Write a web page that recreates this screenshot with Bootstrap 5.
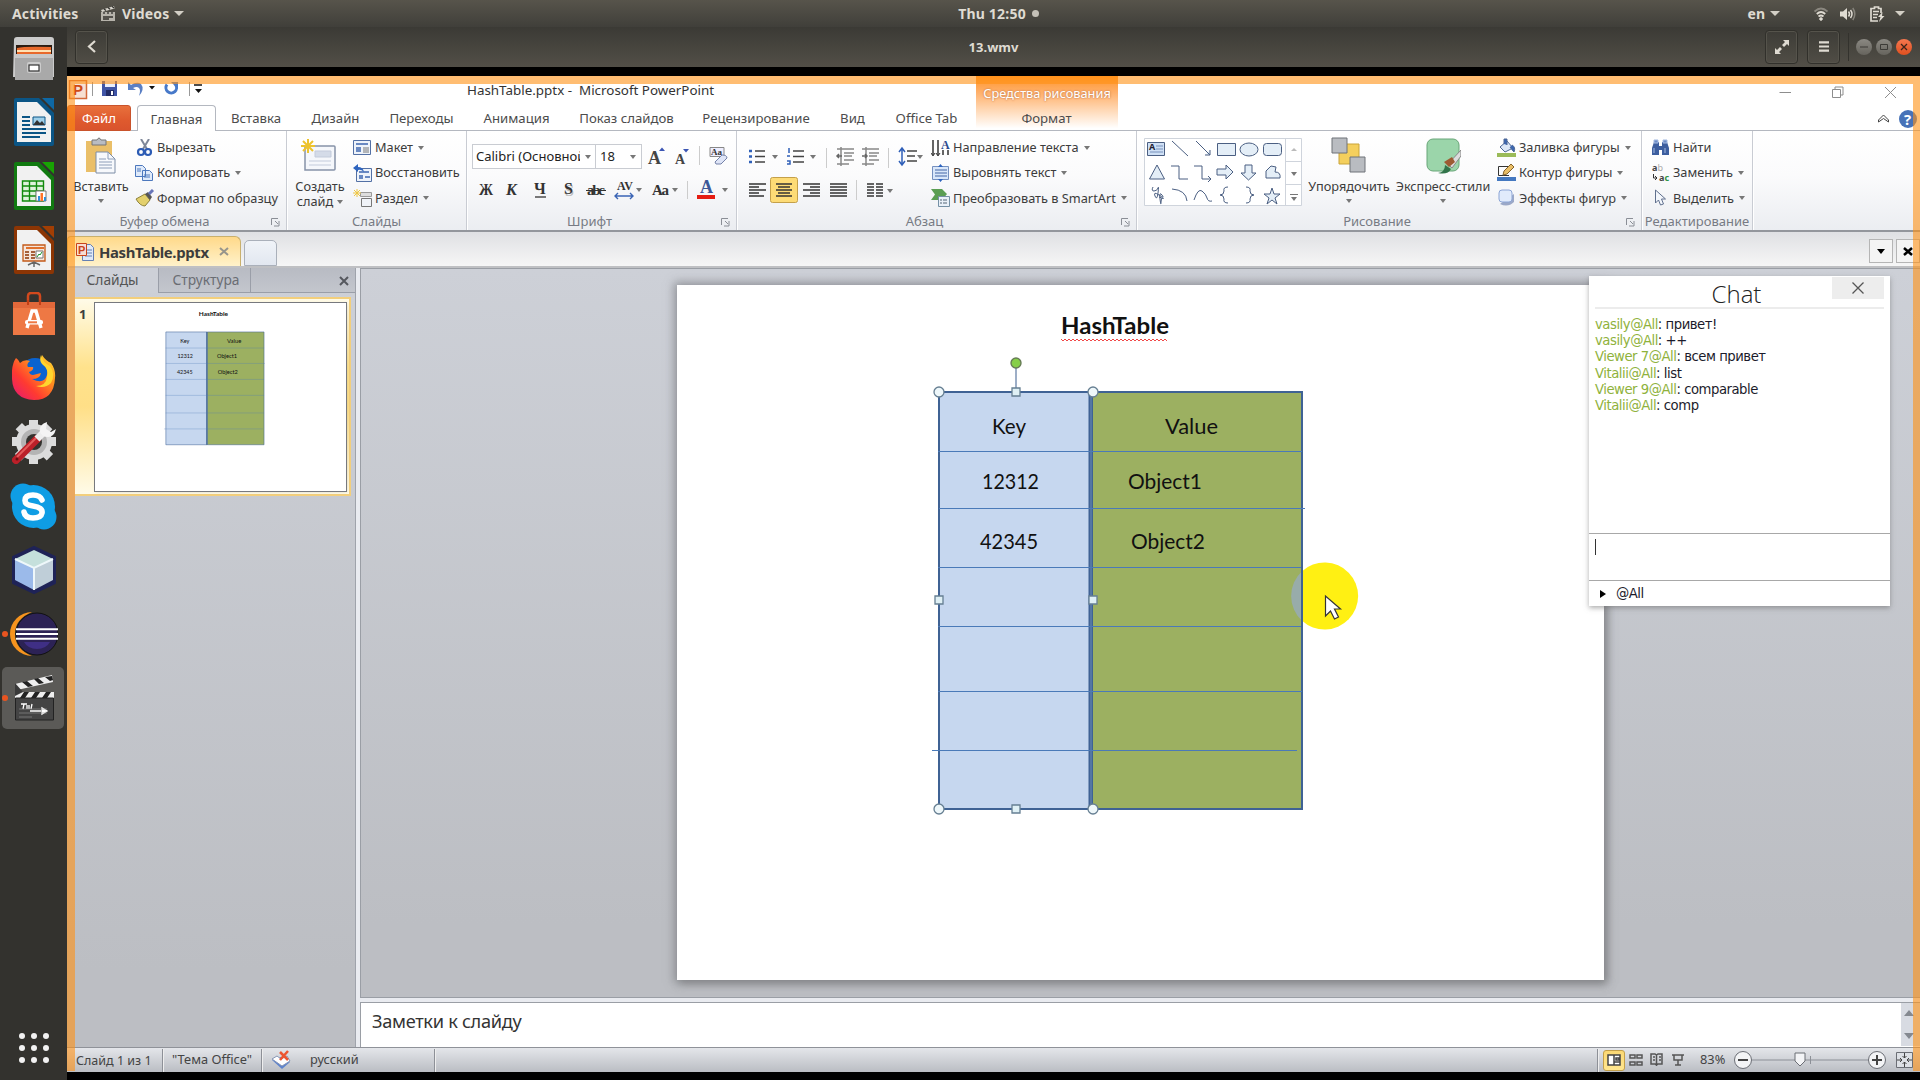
<!DOCTYPE html>
<html lang="ru">
<head>
<meta charset="utf-8">
<title>13.wmv</title>
<link href="https://cdn.jsdelivr.net/npm/bootstrap@5.3.0/dist/css/bootstrap.min.css" rel="stylesheet">
<script src="https://cdn.jsdelivr.net/npm/bootstrap@5.3.0/dist/js/bootstrap.bundle.min.js" defer></script>
<style>
html,body{height:100%}
body{width:1920px;height:1080px;overflow:hidden;background:#000;font-family:"Noto Sans","Open Sans",sans-serif;color:#3c3c3c;font-size:13px;line-height:1.2}
svg{display:block;flex:none}
.nw{white-space:nowrap}
/* desktop */
.topbar{height:27px;background:linear-gradient(#57544b,#403f3a);color:#dfdbd2;font:bold 14px "Noto Sans",sans-serif}
.tri{width:0;height:0;border:5px solid transparent;border-top-color:#d3cfc6;border-bottom:0;flex:none}
.dock{width:67px;background:#33322e;flex:none}
.dock-item{width:67px;height:64px;display:flex;align-items:center;justify-content:center;flex:none;position:relative}
.dock-item:first-child{margin-top:-1px}
.dock-item.active-app::before{content:"";position:absolute;left:2px;top:1px;width:62px;height:62px;border-radius:5px;background:#5b5a57}
.dock-item.running::after{content:"";position:absolute;left:2px;top:29px;width:6px;height:6px;border-radius:50%;background:#e95420}
.dock-item svg{position:relative}
.headbar{height:40px;background:linear-gradient(#3b3a35,#524f47);color:#dfdbd2;font:bold 13px "Noto Sans",sans-serif;padding:0 8px 1px 8px}
.hbtn{width:33px;height:34px;border:1px solid #31302b;box-shadow:0 0 0 1px #55534b inset;border-radius:4px;display:flex;align-items:center;justify-content:center}
.wbtn{width:16px;height:16px;border-radius:50%;background:linear-gradient(#8b8983,#66645d);display:flex;align-items:center;justify-content:center}
.wbtn.quit{background:linear-gradient(#f5774f,#e0501f)}
/* video */
.video{height:995px;background:#fff;position:relative}
.frame{position:absolute;inset:0;border:solid rgba(255,145,20,.6);border-width:8px 7px 0 8px;pointer-events:none;z-index:9}
.titlerow{height:29px;padding-top:4px}
.apptitle{font-size:13.4px;color:#333;width:246px;padding-top:2px}
.tabrow{height:26px;color:#4c4c4c}
.rtab{display:flex;align-items:center;justify-content:center;border-bottom:1px solid #b4b8c0;height:26px;padding-top:3px;font-size:13.2px;white-space:nowrap;flex:none}
.rtab.file{width:64px;background:linear-gradient(#e8703c,#df5a2e 60%,#d9532d);color:#fff;border-radius:3px 3px 0 0;border:1px solid #c9532c;padding-top:2px}
.rtab.cur{width:79px;border:1px solid #b4b8c0;border-bottom:0;border-radius:4px 4px 0 0;background:#fff;padding-top:2px}
.ctx{position:absolute;left:909px;top:0;width:142px;height:54px;background:linear-gradient(#ff9327,#ffb06a 30%,#ffd7b3 62%,rgba(255,255,255,0) 97%);color:#fff;font-size:12.800px;text-align:center;padding-top:10px;text-shadow:0 0 2px #c87b48,0 0 2px #d69060}
.ribbon{height:101px;background:linear-gradient(#fff,#fbfbfc 45%,#ebedf1);border-bottom:2px solid #93969c}
.grp{border-right:1px solid #c9ccd3;box-shadow:1px 0 0 #fff;display:flex;flex-direction:column;flex:none;height:99px;padding-top:4px}
.gbody{height:77px;display:flex}
.glabel{height:18px;color:#777b84;font-size:13px;display:flex;align-items:center;text-align:center;padding-top:1px}
.glabel span{flex:1}
.rrow{height:25.4px;display:flex;align-items:center;white-space:nowrap;font-size:12.75px}
.rrow svg{width:20px;margin-right:2px}
.dd{width:0;height:0;border:3.5px solid transparent;border-top:4px solid #777;border-bottom:0;flex:none;display:inline-block;margin-left:5px}
.big{display:flex;flex-direction:column;align-items:center;text-align:center;padding-top:2px;white-space:nowrap;font-size:12.75px;flex:none}
.big svg{height:38px;margin-bottom:4px}
.big .dd{margin:5px 0 0}
.doctabs{height:36px;background:linear-gradient(#dfe0e3,#f6f6f6);border-bottom:2px solid #bfc0c3}
.doc{width:174px;height:30px;border:1px solid #c9b06d;border-bottom:0;border-radius:4px 6px 0 0;background:linear-gradient(#ffd98a,#fff2ca);font:bold 14.9px "Noto Sans";letter-spacing:-.35px;color:#3c3c3c;padding-left:8px}
.ghost{width:33px;height:26px;border:1px solid #aab0ba;border-radius:5px 5px 0 0;background:linear-gradient(#f0f3f8,#e2e7f0)}
.sqbtn{width:24px;height:24px;border:1px solid #b5b5b5;background:#f4f4f4}
.workarea{height:779px;background:#e9ebf0}
.side{width:289px;background:linear-gradient(#cdd0d7,#bcbec3 90%);border-right:1px solid #9fa3ab;flex:none}
.stabs{height:25px;border-bottom:1px solid #9a9ea8;background:linear-gradient(#b8bbc3,#c3c6cd);font-size:13.8px;color:#555}
.thumb{margin:4px 4px 0 8px;height:199px;border:2px solid #f3cf7c;border-left:0;background:linear-gradient(#fffbe8,#ffe28c 35%,#ffdf87 55%,#fffbe8);padding:4px 3px 3px 0}
.thumb svg{background:#fff;outline:1px solid #77797e;box-shadow:1px 1px 3px #7774}
.main{flex:1;margin-left:4px;display:flex;flex-direction:column}
.stage{height:730px;background:linear-gradient(#cdd0d7,#bcbec3 90%);border:1px solid #9a9ea5;border-width:1px 0 1px 1px;padding:16px 0 0 316px}
.slide{width:927px;height:695px;background:#fff;box-shadow:0 0 9px 3px #74767b99,3px 4px 8px #7778}
.notes{margin-top:4px;height:45px;border:1px solid #9a9ea5;border-width:1px 0 0 1px;background:#fff;font:18.2px/24px "Noto Sans";letter-spacing:-.3px;color:#333;padding:6px 0 0 11px;display:flex;justify-content:space-between}
.status{height:25px;background:linear-gradient(#e4e6ea,#babdc3);border-top:1px solid #8f9299;font-size:12.8px;color:#444}
.vsep{width:1px;height:23px;background:#8d9097;box-shadow:1px 0 #eee;flex:none}
.chat{position:absolute;left:1522px;top:200px;width:301px;height:330px;background:#fff;box-shadow:0 2px 5px #6668;z-index:5;color:#1b1b2b}
.chat-top{height:33px;margin:0 6px;border-bottom:2px solid #ececec;font:300 24px "Open Sans";color:#222;position:relative;text-align:center;padding:1px 6px 0 0}
.chat-x{position:absolute;right:0;top:1px;width:52px;height:22px;background:#ededed}
.msgs{height:224px;padding:7px 6px;font:14.7px/16.2px "DejaVu Sans Condensed","Noto Sans";letter-spacing:-.47px}
.msgs b{font-weight:400;color:#8fb23c}
.hl{background:linear-gradient(#fbd873,#ffe68f);border:1px solid #c4a04a;border-radius:3px}
</style>
</head>
<body class="d-flex flex-column">
<header class="topbar d-flex align-items-center position-relative flex-shrink-0">
  <span class="nw" style="margin-left:12px;width:89px;letter-spacing:.15px">Activities</span>
  <svg width="15" height="15" viewBox="0 0 15 15"><path d="M0 6h14v9H0z" fill="#b6b3ab"/><path d="M0 4 13 0l.6 2.6L1 6z" fill="#d8d5cd"/><path d="m3 3 2 1.6m2-3 2 1.7m2-3 2 1.6M3 6v2m4-2v2m4-2v2M2 11h10M2 13h6" stroke="#33322e" stroke-width="1.3"/></svg>
  <span class="nw" style="margin:0 5px 0 6px;letter-spacing:.2px">Videos</span><i class="tri"></i>
  <span class="position-absolute start-0 end-0 text-center" style="padding-left:77px"><span class="d-inline-flex align-items-center" style="gap:6px"><span style="letter-spacing:.2px">Thu 12:50</span><svg width="7" height="7"><circle cx="3.5" cy="3.5" r="3.5" fill="#c4c0b7"/></svg></span></span>
  <div class="ms-auto d-flex align-items-center" style="margin-right:15px">
    <span style="margin-right:5px">en</span><i class="tri"></i>
    <svg style="margin-left:34px" width="14" height="14" viewBox="0 0 14 14" fill="none" stroke="#dfdbd2" stroke-width="1.8"><path d="M.5 4.5Q7-1.5 13.500 4.500" stroke="#8a877f"/><path d="M2.800 7Q7 3 11.200 7M4.500 9.500Q7 7.500 9.500 9.500"/><circle cx="7" cy="12" r="1.300" fill="#dfdbd2" stroke-width="1"/></svg>
    <svg style="margin-left:12px" width="16" height="14" viewBox="0 0 16 14"><path d="M0 4.500h3L7 1v12L3 9.500H0z" fill="#dfdbd2"/><path d="M8.500 4.500q2 2.500 0 5M10.500 3q3 4 0 8" fill="none" stroke="#dfdbd2" stroke-width="1.500"/><path d="M12.800 1q4 6 0 12" fill="none" stroke="#86837b" stroke-width="1.500"/></svg>
    <svg style="margin:0 10px 0 14px" width="15" height="16" viewBox="0 0 15 16" fill="none" stroke="#dfdbd2" stroke-width="1.700"><path d="M11 7V2.500H8.500V1H4.500v1.500H1V15h7M3 5.500h6M3 8.500h5M3 11.500h4"/><path d="M12.500 6 8 11h2.500L9 16l5.500-6H12z" fill="#dfdbd2" stroke="none"/></svg>
    <i class="tri"></i>
  </div>
</header>
<div class="d-flex flex-grow-1">
<nav class="dock d-flex flex-column">
  <div class="dock-item"><svg width="42" height="44" viewBox="0 0 42 44"><path d="M1 4q0-3 3-3h34q3 0 3 3v37H0z" fill="#cbcbcb"/><path d="M3 9h36v12H3z" fill="#2b1c12"/><path d="M4 12q8-2 34-1v9H4z" fill="#e8692b"/><path d="M4 14h34v2H4z" fill="#ffe1b3"/><path d="M2 18h38v26H2z" fill="#a9a9a9"/><path d="M2 18h38v4H2z" fill="#c8c8c8"/><rect x="14" y="26" width="14" height="11" rx="2" fill="#ccc"/><rect x="16" y="29" width="10" height="6" fill="#fff" stroke="#333" stroke-width="1.200"/></svg></div>
  <div class="dock-item"><svg width="40" height="48" viewBox="0 0 40 48"><path d="M2 0h24l14 14v32q0 2-2 2H2q-2 0-2-2V2q0-2 2-2z" fill="#0b5585"/><path d="M3 4h20l14 14v26H3z" fill="#f1f1f1"/><path d="m25 0 15 15V0z" fill="#33322e"/><path d="M28 0h12v12z" fill="#0e68a5"/><path d="M8 19h8M8 23h8M8 27h8M8 31h24M8 35h24M8 39h18" stroke="#0b5585" stroke-width="2"/><path d="M19 19h12v8H19z" fill="#9fd0ea" stroke="#0b5585"/><path d="m19 27 4-5 3 3 2-2 3 4z" fill="#333"/></svg></div>
  <div class="dock-item"><svg width="40" height="48" viewBox="0 0 40 48"><path d="M2 0h24l14 14v32q0 2-2 2H2q-2 0-2-2V2q0-2 2-2z" fill="#117a10"/><path d="M3 4h20l14 14v26H3z" fill="#f1f1f1"/><path d="m25 0 15 15V0z" fill="#33322e"/><path d="M28 0h12v12z" fill="#18a303"/><path d="M8.500 19h21v20h-21zM8 24h21M8 29h21M8 34h21M15.500 19v20M22.500 19v20" stroke="#118a0c" stroke-width="1.400" fill="#dff3dc"/><path d="M22 29h10v10H22z" fill="#fff" stroke="#777"/><path d="M24 39v-5h2v5zM30 39v-4h2v4z" fill="#2c8fd8"/><path d="M26.500 39v-8h2.500v8z" fill="#ff7429"/></svg></div>
  <div class="dock-item"><svg width="40" height="48" viewBox="0 0 40 48"><path d="M2 0h24l14 14v32q0 2-2 2H2q-2 0-2-2V2q0-2 2-2z" fill="#8c3504"/><path d="M3 4h20l14 14v26H3z" fill="#f1f1f1"/><path d="m25 0 15 15V0z" fill="#33322e"/><path d="M28 0h12v12z" fill="#a33e03"/><path d="M9 19h22v16H9z" fill="#f4e5dc" stroke="#c35a18" stroke-width="1.300"/><path d="M12 22h18" stroke="#e0712d" stroke-width="2"/><path d="M11 26h4M11 29h4M11 32h4M17 26h4M17 29h4M17 32h4" stroke="#8c3504" stroke-width="1.500"/><path d="M22 25h7v7h-7z" fill="#fff" stroke="#777"/><path d="m23 31 2-3 1 1 2-3" fill="none" stroke="#17962b"/><path d="m14 39 6-3 6 3M20 36v5" stroke="#666" stroke-width="1.500" fill="none"/></svg></div>
  <div class="dock-item"><svg width="42" height="44" viewBox="0 0 42 44"><path d="M15 13V4q0-3 3-3h6q3 0 3 3v9" fill="none" stroke="#d2491d" stroke-width="2.500"/><path d="M0 10h42v33H0z" fill="#ee7844"/><path d="M0 10h42v6H0z" fill="#e2683a"/><path d="M15 13V8M27 13V8" stroke="#c33f15" stroke-width="2"/><path d="m14 36 5-17h4l5 17" fill="none" stroke="#fff" stroke-width="3.400"/><rect x="12" y="28" width="18" height="4.500" rx="2" fill="#fff"/><path d="M15 30.300h9" stroke="#ee7844" stroke-width="2"/></svg></div>
  <div class="dock-item"><svg width="44" height="46" viewBox="0 0 44 46"><defs><linearGradient id="ff" x1="0" y1="1" x2="1" y2="0"><stop stop-color="#e3157a"/><stop offset=".35" stop-color="#ff3b30"/><stop offset=".7" stop-color="#ff9a1c"/><stop offset="1" stop-color="#ffe83d"/></linearGradient></defs><circle cx="23" cy="19" r="16" fill="#0a63d0"/><path d="M4 3q3 2 4 5 4-4 10-2-4 3-2 6h5q1 3-4 5 1 3 4 3l8-2q-1 6-9 6 12 6 15-4 2-8-4-12-2-3-1-8 4 6 9 8 5 7 4 15Q42 45 22 45 1 44 0 24-1 10 4 3z" fill="url(#ff)"/><path d="M29 0q-2 6 1 9 7 5 5 13-1 9-11 9 9 3 15-3 5-9-1-17-7-3-9-11z" fill="#ffd52e"/></svg></div>
  <div class="dock-item"><svg width="44" height="44" viewBox="0 0 44 44"><g fill="#dcdcdc"><circle cx="22" cy="22" r="18"/><path d="M17 0h9v44h-9zM0 17h44v9H0z"/><path d="M17 0h9v44h-9zM0 17h44v9H0z" transform="rotate(45 22 22)"/></g><circle cx="22" cy="22" r="13" fill="#b4b4b4"/><circle cx="22" cy="22" r="8" fill="#33322e"/><path d="M4 40 25 19" stroke="#bb2029" stroke-width="8" stroke-linecap="round"/><path d="m5 37 19-19" stroke="#e35b5b" stroke-width="2"/><path d="m25 19 6-6" stroke="#eee" stroke-width="7"/><path d="M28 12q-1-8 7-10l-1 7 5 3 5-3q-2 8-8 8-6 0-8-5z" fill="#f4f4f4"/><circle cx="5" cy="39" r="1.500" fill="#611"/></svg></div>
  <div class="dock-item"><svg width="47" height="47" viewBox="0 0 47 47"><g fill="#0f9de4"><circle cx="13" cy="13" r="12.500"/><circle cx="34" cy="34" r="12.500"/><circle cx="23.500" cy="23.500" r="21.500"/></g><path d="M32 17q-2-5-9-5-8 0-8 5.500 0 4.500 8 5.500 10 1.500 9 7-1 5-9 5-8 0-9-6" fill="none" stroke="#fff" stroke-width="5.600" stroke-linecap="round"/></svg></div>
  <div class="dock-item"><svg width="46" height="48" viewBox="0 0 46 48"><path d="m23 1 21 10v26L23 47 2 37V11z" fill="#1f2357" stroke="#1f2357" stroke-width="2" stroke-linejoin="round"/><path d="m23 4 19 9-19 9-19-9z" fill="#c5e0dc"/><path d="m4 13 19 9v22L4 34z" fill="#9bbaea"/><path d="m42 13-19 9v22l19-10z" fill="#bfced8"/><path d="M23 22v22M4 13l19 9 19-9" stroke="#eef7fa" stroke-width="2" fill="none"/></svg></div>
  <div class="dock-item running"><svg width="48" height="44" viewBox="0 0 48 44"><path d="M22 0a22 22 0 1 0 0 44Q5 37 5 22T22 0z" fill="#f7941e"/><circle cx="27" cy="22" r="21" fill="#2c2255" stroke="#111"/><path d="M14 30h26q-4 7-13 7t-13-7z" fill="#3f2f85"/><path d="M6 17.200h42M6 22h42M6 26.800h42" stroke="#fff" stroke-width="1.900"/></svg></div>
  <div class="dock-item running active-app"><svg width="40" height="46" viewBox="0 0 40 46"><path d="M1 9 38 0l1 7L3 15z" fill="#eee"/><path d="m8 7 6 5 5-1-6-5zm12-3 5 5 5-1-6-5zM31 2l5 4 3-1-1-4z" fill="#222"/><path d="M1 17h39v6H1z" fill="#eee"/><path d="m10 17-4 6h5l4-6zm11 0-4 6h5l4-6zm11 0-4 6h5l4-6z" fill="#222"/><path d="M1 8v13l8-4z" fill="#3a3a3a"/><path d="M1.500 23h38v22h-38z" fill="#444" stroke="#222"/><path d="M7 29h6m-3 0-1 5m4-4v4m2-4v4m3-5-1 5M16 36h11M28 33v6l5-3z" stroke="#fff" stroke-width="1.300" fill="#fff"/><path d="M5 34h28M5 38h28M5 42h13" stroke="#999" stroke-width=".600"/></svg></div>
  <div class="dock-item mt-auto"><svg width="30" height="30" viewBox="0 0 30 30" fill="#f2f2f2"><circle cx="3" cy="3" r="3"/><circle cx="15" cy="3" r="3"/><circle cx="27" cy="3" r="3"/><circle cx="3" cy="15" r="3"/><circle cx="15" cy="15" r="3"/><circle cx="27" cy="15" r="3"/><circle cx="3" cy="27" r="3"/><circle cx="15" cy="27" r="3"/><circle cx="27" cy="27" r="3"/></svg></div>
</nav>
<main class="flex-grow-1 d-flex flex-column">
  <div class="headbar d-flex align-items-center position-relative">
    <span class="hbtn"><svg width="10" height="13" viewBox="0 0 10 13"><path d="M8 1 2 6.500 8 12" fill="none" stroke="#dfdbd2" stroke-width="2.200"/></svg></span>
    <span class="position-absolute start-0 end-0 text-center">13.wmv</span>
    <div class="ms-auto d-flex align-items-center">
      <span class="hbtn" style="margin-right:9px"><svg width="14" height="14" viewBox="0 0 14 14" fill="#dfdbd2"><path d="M8 0h6v6l-2-2-3 3-2-2 3-3zM0 8l2 2 3-3 2 2-3 3 2 2H0z"/></svg></span>
      <span class="hbtn" style="margin-right:8px"><svg width="10" height="11"><path d="M0 1.300h10M0 5.500h10M0 9.700h10" stroke="#dfdbd2" stroke-width="2.200"/></svg></span>
      <span style="width:1px;height:28px;background:#33322d;margin-right:7px"></span>
      <span class="wbtn" style="margin-right:4px"><svg width="8" height="8"><path d="M0 4h8" stroke="#3c3b37"/></svg></span>
      <span class="wbtn" style="margin-right:4px"><svg width="8" height="8"><path d="M.500 1.500h7v5h-7z" stroke="#3c3b37" fill="none"/></svg></span>
      <span class="wbtn quit"><svg width="8" height="8"><path d="m1 1 6 6m0-6L1 7" stroke="#3c241b" stroke-width="1.300"/></svg></span>
    </div>
  </div>
  <div style="height:9px"></div>
  <section class="video">
    <div class="frame"></div>
    <div class="titlerow d-flex align-items-start">
      <div style="width:400px;padding-left:1px" class="d-flex"><svg width="150" height="20" viewBox="0 0 150 20"><path d="M1.500.500h17v18h-17z" fill="#f7e0d2" stroke="#d46a3b" stroke-width="1.500"/><text x="5" y="15" font-family="Liberation Sans" font-weight="bold" font-size="15" fill="#cf4a17">P</text><path d="M24.500 2v14M121.500 2v14" stroke="#999"/><path d="M34 1h15v15H34z" fill="#4055a6"/><path d="M37 1h10v6H37z" fill="#e9eefb"/><path d="M38 10h8v6h-8z" fill="#222c66"/><path d="M43 11h2v4h-2z" fill="#fff"/><path d="M60 2v8h8l-3-2q4-2 6 0t0 8q6-7 2-12-4-3-10 1z" fill="#5a7fc4"/><path d="M81 6h6l-3 3.500z" fill="#111"/><path d="M99 4.500a5.300 5.300 0 1 0 8.500 0" fill="none" stroke="#4779c9" stroke-width="3"/><path d="M103 2h7v7z" fill="#4779c9"/><path d="M126 5h8" stroke="#111" stroke-width="1.500"/><path d="M127 9h7l-3.500 4z" fill="#111"/></svg></div>
      <span class="apptitle nw" style="white-space:pre">HashTable.pptx -  Microsoft PowerPoint</span>
      <svg class="ms-auto" style="margin-right:22px;margin-top:6px" width="120" height="14" viewBox="0 0 120 14" fill="none" stroke="#8d8d8d"><path d="M1.500 6.500h11.500M54.500 3.500h8v8h-8zM57 3V1h8v8h-2M107 1l11 11M118 1l-11 11"/></svg>
    </div>
    <div class="ctx">Средства рисования</div>
    <div class="tabrow d-flex position-relative">
      <div class="rtab file">Файл</div><div class="rtab" style="width:6px"></div><div class="rtab cur">Главная</div>
      <div class="rtab" style="width:80px">Вставка</div><div class="rtab" style="width:79px">Дизайн</div><div class="rtab" style="width:93px">Переходы</div><div class="rtab" style="width:97px">Анимация</div><div class="rtab" style="width:123px">Показ слайдов</div><div class="rtab" style="width:136px">Рецензирование</div><div class="rtab" style="width:57px">Вид</div><div class="rtab" style="width:91px">Office Tab</div><div class="rtab" style="width:149px">Формат</div>
      <div class="rtab flex-grow-1 justify-content-end" style="padding-right:3px"><svg width="40" height="20" viewBox="0 0 40 20"><path d="m1.500 11 5-5 5 5v2l-5-3.500-5 3.500z" fill="none" stroke="#444"/><circle cx="31" cy="10" r="9" fill="#4672b8"/><text x="27" y="15.500" font-size="15" font-weight="bold" fill="#fff" font-family="Open Sans">?</text></svg></div>
    </div>
    <div class="ribbon d-flex">
      <div class="grp" style="width:220px"><div class="gbody">
        <div class="big" style="width:54px;margin:0 7px 0 7px"><svg width="34" height="38" viewBox="0 0 34 38"><path d="M2 4h26v31H2z" fill="#eabf68"/><path d="M8 3h5q2-4 4 0h5v5H8z" fill="#b9bcc2" stroke="#777"/><path d="M12 15h12l7 7v14H12z" fill="#f7f9fc" stroke="#7d8da6"/><path d="M24 15v7h7M15 22h7M15 25h13M15 28h13M15 31h13" fill="none" stroke="#8c9db8"/></svg>Вставить<i class="dd"></i></div>
        <div><div class="rrow"><svg height="18" viewBox="0 0 20 18"><path d="m6 0 6 10M14 0 8 10" stroke="#7e8798" stroke-width="2"/><circle cx="6" cy="13" r="3" fill="none" stroke="#2c5bb4" stroke-width="2.200"/><circle cx="13" cy="13" r="3" fill="none" stroke="#2c5bb4" stroke-width="2.200"/></svg>Вырезать</div>
        <div class="rrow"><svg height="18" viewBox="0 0 20 18"><path d="M.500 1.500h7l3 3v8H.500zM7.500 6.500h7l3 3v7h-10z" fill="#dfeafa" stroke="#4d78bd"/><path d="M2 5h4M2 7h4M9 11h6M9 13h6" stroke="#4d78bd"/></svg>Копировать<i class="dd"></i></div>
        <div class="rrow"><svg height="18" viewBox="0 0 20 18"><path d="m1 10 9-5 5 6-5 6Q5 17 1 10z" fill="#e3d06d" stroke="#8d813a"/><path d="m10 5 3-2 4 5-2 3z" fill="#555"/><path d="m14 5 4-4" stroke="#6775b9" stroke-width="3"/></svg>Формат по образцу</div></div>
      </div><div class="glabel"><span>Буфер обмена</span><svg width="24" height="12" viewBox="0 0 24 12"><path d="M9.500 9V2.500H16M13 5l3 3m1-3v5h-5" fill="none" stroke="#8a8e96"/></svg></div></div>
      <div class="grp" style="width:180px"><div class="gbody">
        <div class="big" style="width:52px;margin:0 3px 0 7px;line-height:14.500px"><svg width="38" height="38" viewBox="0 0 38 38"><path d="M4 9h29q1 0 1 1v22q0 1-1 1H4z" fill="#f5f7fb" stroke="#8692a8" stroke-width="1.500"/><path d="M14 14h16v6H14zM8 24h22M8 28h22" fill="#d4dbe8" stroke="#c3cbdb"/><path d="M7 2v14M0 9h14M2 4l10 10M12 4 2 14" stroke="#edc32e" stroke-width="2"/></svg>Создать<span>слайд<i class="dd" style="margin:0 0 2px 4px"></i></span></div>
        <div style="padding-left:4px"><div class="rrow"><svg height="18" viewBox="0 0 20 18"><path d="M.500 1.500h17v14H.500z" fill="#eef3fa" stroke="#5370a5"/><path d="M3 4h12v2H3zM3 8h5v5H3z" fill="#6989c2"/><path d="M10 9h6M10 11h6M10 13h6" stroke="#777"/></svg>Макет<i class="dd"></i></div>
        <div class="rrow"><svg height="18" viewBox="0 0 20 18"><path d="M3.500 4.500h15v13h-15z" fill="#eef3fa" stroke="#5370a5"/><path d="M6 7h10v2H6zM6 11h4v4H6zM12 12h5v2h-5z" fill="#6989c2"/><path d="m0 4 5-4v3q5 0 6 5-3-3-6-2v2z" fill="#2e64bf"/></svg>Восстановить</div>
        <div class="rrow"><svg height="18" viewBox="0 0 20 18"><path d="M7.500 3.500h11v4h-11z" fill="#ddd" stroke="#999"/><path d="M8.500 9.500h10v8h-10z" fill="#f0f3f8" stroke="#777"/><path d="M4 0v8M0 4h8M1 1l6 6M7 1 1 7" stroke="#eec642"/></svg>Раздел<i class="dd"></i></div></div>
      </div><div class="glabel"><span>Слайды</span></div></div>
      <div class="grp" style="width:270px"><div class="gbody flex-column" style="padding-left:5px;padding-top:8px">
        <div class="d-flex align-items-center" style="height:27px"><div class="d-flex align-items-center bg-white" style="width:124px;height:25px;border:1px solid #c9ccd2;padding-left:3px"><span class="nw overflow-hidden" style="width:104px;font-size:13px;color:#222">Calibri (Основной)</span><i class="dd"></i></div><div class="d-flex align-items-center bg-white" style="width:46px;height:25px;border:1px solid #c9ccd2;border-left:0;padding-left:4px"><span style="width:25px;color:#222">18</span><i class="dd"></i></div>
        <svg width="90" height="26" viewBox="0 0 90 26" font-family="Liberation Serif" font-weight="bold"><text x="6" y="20" font-size="18" fill="#444">A</text><path d="m17 7 3-3.500L23 7z" fill="#3b55b4"/><text x="33" y="20" font-size="14" fill="#444">A</text><path d="M41 5h6l-3 3.500z" fill="#3b55b4"/><path d="M57.500 2v19" stroke="#ccc"/><path d="M68 3.500h14v9H68z" fill="#eef" stroke="#888"/><text x="69" y="11" font-size="9" fill="#333">Aa</text><path d="m73 18 7-7q5 0 5 3l-6 6h-5z" fill="#dfe5f7" stroke="#7481a8"/></svg></div>
        <svg style="margin-top:5px" width="262" height="30" viewBox="0 0 262 30" font-family="Liberation Serif" font-weight="bold" fill="#333"><text x="7" y="20" font-size="16" textLength="14" lengthAdjust="spacingAndGlyphs">Ж</text><text x="34" y="20" font-size="16" font-style="italic">К</text><text x="62" y="19" font-size="16">Ч</text><path d="M63 22h11" stroke="#333" stroke-width="1.300"/><text x="93" y="21" font-size="16" fill="#bbb">S</text><text x="92" y="19" font-size="16">S</text><text x="115" y="20" font-size="15" textLength="18">abc</text><path d="M114 15.500h20" stroke="#333"/><text x="145" y="15" font-size="12" textLength="16">AV</text><path d="M143 21h18m-15-3-3 3 3 3m12-6 3 3-3 3" fill="none" stroke="#3a64b5" stroke-width="1.400"/><path d="M164 13h6l-3 4zM200 13h6l-3 4zM250 13h6l-3 4z" fill="#777"/><text x="180" y="20" font-size="15" textLength="17">Aa</text><path d="M215.500 6v18" stroke="#ccc"/><text x="228" y="18" font-size="18" fill="#3c5797">A</text><path d="M225 20h18v4h-18z" fill="#e51c12"/></svg>
      </div><div class="glabel"><span>Шрифт</span><svg width="24" height="12" viewBox="0 0 24 12"><path d="M9.500 9V2.500H16M13 5l3 3m1-3v5h-5" fill="none" stroke="#8a8e96"/></svg></div></div>
      <div class="grp" style="width:400px"><div class="gbody">
        <svg style="margin-right:13px" width="184" height="72" viewBox="0 0 184 72" fill="none" stroke="#444" stroke-width="1.500"><path d="M18 16h10M18 21.500h10M18 27h10"/><path d="M12 16h3M12 21.500h3M12 27h3" stroke="#2f5fb8" stroke-width="2.500"/><path d="M56 16h11M56 21.500h11M56 27h11"/><path d="M52 13v5M50 21h3M50 26h3v3h-3" stroke="#2f5fb8"/><path d="M35 20h6l-3 4zM73 20h6l-3 4zM182 20h6l-3 4zM150 54h6l-3 4z" fill="#777" stroke="none"/><path d="M89.500 13v20M151.500 13v20M119.500 45v20" stroke="#ccc" stroke-width="1"/><g stroke="#888"><path d="M100 14h17M107 18h10M107 21h8M107 25h10M100 29h12M104 12v19M125 14h17M132 18h10M132 21h8M132 25h10M125 29h12M129 12v19"/></g><path d="m105 21-5 0m2-2-2 2 2 2M125 21h5m-2-2 2 2-2 2" stroke="#666"/><path d="M165 14v15m-3-12 3-4 3 4m-6 9 3 4 3-4" stroke="#2f5fb8"/><path d="M170 16h10M170 21h8M170 26h10"/><rect x="33.500" y="42.500" width="27" height="25" rx="2" fill="#fddb76" stroke="#c4a04a" stroke-width="1"/><path d="M12 49h17M12 52h10M12 55h17M12 58h10M12 61h15M39 49h16M41 52h12M39 55h16M41 58h12M39 61h16M66 49h17M73 52h10M66 55h17M73 58h10M66 61h17M93 49h17M93 52h17M93 55h17M93 58h17M93 61h17M130 49h7M130 52h7M130 55h7M130 58h7M130 61h7M139 49h7M139 52h7M139 55h7M139 58h7M139 61h7" stroke="#333"/></svg>
        <div style="margin-left:-11px;display:flex;align-items:flex-start"><i class="dd" style="margin:20px 8px 0 -6px"></i><div><div class="rrow"><svg height="20" viewBox="0 0 20 20"><path d="M2 2v15M7 2v15M12 12v5M17 12v5" stroke="#333" stroke-width="1.500"/><path d="m0 15 2 3 2-3m1 0 2 3 2-3" fill="none" stroke="#333"/><text x="10" y="11" font-size="12" font-family="Liberation Serif" font-weight="bold" fill="#2c4a8f">A</text></svg>Направление текста<i class="dd"></i></div>
        <div class="rrow"><svg height="18" viewBox="0 0 20 18"><path d="M1.500 2.500h16v13h-16z" fill="#d9e7fa" stroke="#7590bf"/><path d="M4 6h12M4 9h12M4 12h12" stroke="#4466a5"/><path d="m7 3 2.500-3L12 3zM7 15l2.500 3 2.500-3z" fill="#2e64bf"/></svg>Выровнять текст<i class="dd"></i></div>
        <div class="rrow"><svg height="18" viewBox="0 0 20 18"><path d="M0 0h11l5 5-5 6H0l4-5.500z" fill="#5b9e53"/><path d="M7.500 7.500h11v10h-11z" fill="#e9f0f8" stroke="#7590a5"/><path d="M9 11h2m1 0h4m-7 3h2m1 0h4" stroke="#567"/></svg>Преобразовать в SmartArt<i class="dd"></i></div></div></div>
      </div><div class="glabel"><span>Абзац</span><svg width="24" height="12" viewBox="0 0 24 12"><path d="M9.500 9V2.500H16M13 5l3 3m1-3v5h-5" fill="none" stroke="#8a8e96"/></svg></div></div>
      <div class="grp" style="width:505px"><div class="gbody">
        <svg style="margin:3px 2px 0 7px" width="159" height="69" viewBox="0 0 159 69" fill="#e4eef7" stroke="#4b5f82"><path d="M.500.500h157v67H.500z" fill="#fff" stroke="#cfd4dc"/><path d="M141.500 0v68M141 23.500h17M141 46.500h17" stroke="#cfd4dc"/><path d="M147 13h6l-3-3z" fill="#bbb" stroke="none"/><path d="M147 34h6l-3 4zM147 59h6l-3 4z" fill="#777" stroke="none"/><path d="M146 56.500h8" stroke="#777"/><path d="M3.500 4.500h17v13h-17z" fill="#cfe0f5"/><path d="M12 8h7M12 11h7M6 14h13" stroke="#7891bb"/><text x="5" y="12" font-size="9" font-weight="bold" fill="#223" stroke="none">A</text><path d="m28 3 16 15m8-15 14 14m0-5v5h-5M73.500 5.500h18v12h-18z"/><ellipse cx="105" cy="11.500" rx="9" ry="6.500"/><rect x="119.500" y="5.500" width="18" height="12" rx="3"/><path d="m13 27 7.500 14h-15zM73 31h9v-4l7 7-7 7v-4h-9zM101 27h7v8h4l-7.500 7-7.500-7h4zM122 40v-7l5-5 5 1-1 5q6 0 5 6z"/><path d="M27 28h8v13h9M50 28h8v13h9m-3-3 3 3-3 3M9 49q-2 4 1 4t4-3 0 5-3 3 4-1 3 0-2 4 1 3 2-4-4-1M28 51q14 1 15 12M50 62q4-12 8-9t5 7 5 3M84 49q-5 0-4 4 0 4-4 4 4 0 4 4-1 4 4 4M102 49q5 0 4 4 0 4 4 4-4 0-4 4 1 4-4 4" fill="none"/><path d="m128 50 2 6h6l-5 4 2 6-5-4-5 4 2-6-5-4h6z"/></svg>
        <div class="big" style="width:88px"><svg width="36" height="38" viewBox="0 0 36 38"><path d="M8 7h20v20H8z" fill="#f4cf5d" stroke="#c9a43b"/><path d="M1 1h15v15H1zM19 20h15v15H19z" fill="#b9bcc1" stroke="#6f7278"/></svg>Упорядочить<i class="dd"></i></div>
        <div class="big" style="width:100px;font-size:12.600px;padding-top:2px"><svg width="36" height="38" viewBox="0 0 36 38"><rect x="2" y="2" width="32" height="32" rx="6" fill="#9bd5aa" stroke="#69a678"/><path d="m23 27 13-14v6L27 31z" fill="#ddd" stroke="#888"/><path d="m19 25 8-5 3 5-6 5z" fill="#9d5b33"/><path d="M13 36q7-1 7-8l6 4q-3 6-13 4z" fill="#32744a"/></svg>Экспресс-стили<i class="dd"></i></div>
        <div style="margin-left:4px"><div class="rrow"><svg height="20" viewBox="0 0 20 20"><path d="m3 9 7-6 6 7-8 4z" fill="#dce7f6" stroke="#4d6795"/><path d="M7 6V1h3v6m5 0q4 2 2 7-2-2-4-5" fill="#3c66b0" stroke="#4d6795"/><path d="M0 15h19v4H0z" fill="#9bbb59"/></svg>Заливка фигуры<i class="dd"></i></div>
        <div class="rrow"><svg height="20" viewBox="0 0 20 20"><path d="M12 3.500H1.500v9H12" fill="none" stroke="#333"/><path d="m6 12 1-4 7-7 3 3-7 7z" fill="#eabf68" stroke="#84622a"/><path d="M0 14h19v4H0z" fill="#4478c0"/></svg>Контур фигуры<i class="dd"></i></div>
        <div class="rrow"><svg height="18" viewBox="0 0 20 18"><path d="M3 15q8 4 14-2V5z" fill="#9ba8c7"/><rect x="2" y="1" width="13" height="12" rx="3" fill="#e1ebfb" stroke="#8ca5d6"/></svg>Эффекты фигур<i class="dd"></i></div></div>
      </div><div class="glabel"><span>Рисование</span><svg width="24" height="12" viewBox="0 0 24 12"><path d="M9.500 9V2.500H16M13 5l3 3m1-3v5h-5" fill="none" stroke="#8a8e96"/></svg></div></div>
      <div class="grp" style="width:111px"><div class="gbody" style="padding-left:9px">
        <div><div class="rrow"><svg height="18" viewBox="0 0 20 18"><path d="M3 3h5v4h3V3h5l2 6v7h-7v-5H8v5H1V9z" fill="#3d5e9f"/><path d="M3 1h4v3H3zM12 1h4v3h-4zM3 9v5M14 9v5" fill="#6d8cc8" stroke="#a5bbe2"/></svg>Найти</div>
        <div class="rrow"><svg class="overflow-visible" height="22" viewBox="0 0 20 22" font-weight="bold" font-size="9"><text x="1" y="9" fill="#444">a<tspan fill="#aaa" font-weight="400">b</tspan></text><path d="M2.500 12v4H6m-2-2 2 2-2 2" stroke="#333" fill="none"/><text x="8" y="19" fill="#444">a<tspan fill="#2f9447">c</tspan></text></svg>Заменить<i class="dd"></i></div>
        <div class="rrow"><svg height="18" viewBox="0 0 20 18"><path d="M4.500 1v13l3-3 2 5 3-1-2-5h4z" fill="#f3f6fb" stroke="#60708e"/></svg>Выделить<i class="dd"></i></div></div>
      </div><div class="glabel"><span>Редактирование</span></div></div>
    </div>
    <div class="doctabs d-flex align-items-end">
      <div class="doc d-flex align-items-center"><svg width="20" height="20" viewBox="0 0 20 20"><path d="M6.500 2.500h8l3 3v13h-11z" fill="#dfe9f8" stroke="#6580b2"/><path d="M9 8h7M9 11h7M9 14h7" stroke="#6580b2"/><path d="M.500 1.500h10v12H.500z" fill="#f7ddd2" stroke="#c9431b"/><text x="2" y="11.500" font-size="11" font-family="Liberation Sans" fill="#c9431b">P</text></svg><span style="width:120px;margin-left:3px">HashTable.pptx</span><svg width="10" height="9"><path d="m1 1 8 7m0-7L1 8" stroke="#96948c" stroke-width="2"/></svg></div>
      <div class="ghost" style="margin-left:3px"></div>
      <div class="ms-auto d-flex" style="gap:3px;padding-bottom:3px"><div class="sqbtn d-flex align-items-center justify-content-center"><svg width="8" height="5"><path d="M0 0h8L4 5z"/></svg></div><div class="sqbtn d-flex align-items-center justify-content-center"><svg width="10" height="9"><path d="m1 1 8 7m0-7L1 8" stroke="#000" stroke-width="2.500"/></svg></div></div>
    </div>
    <div class="workarea d-flex">
      <aside class="side">
        <div class="stabs d-flex"><div class="d-flex align-items-center justify-content-center" style="width:91px;height:25px;background:#cdd0d7">Слайды</div><div class="d-flex align-items-center justify-content-center" style="width:93px;border:1px solid #9a9ea8;border-width:0 1px;color:#6a6d73;padding-left:3px">Структура</div><svg class="ms-auto" style="margin:8px 6px 0 0" width="10" height="10"><path d="m1 1 8 8m0-8L1 9" stroke="#55585e" stroke-width="2"/></svg></div>
        <div class="thumb d-flex justify-content-between"><b style="padding:4px 0 0 4px;font-size:13px">1</b>
        <svg width="251" height="188" viewBox="0 0 928 695" preserveAspectRatio="none"><use href="#deck"/></svg></div>
      </aside>
      <div class="main">
        <div class="stage"><div class="slide position-relative">
          <svg width="928" height="695" viewBox="0 0 928 695" style="overflow:visible">
            <g id="deck"><text x="384" y="49" font-family="Lato" font-weight="bold" font-size="23" textLength="108" lengthAdjust="spacingAndGlyphs" fill="#111">HashTable</text>
            <path d="M262 107h152v417H262z" fill="#c6d7ef" stroke="#3f6294" stroke-width="2"/><path d="M415 107h210v417H415z" fill="#9cb061" stroke="#3f6294" stroke-width="2"/><path d="M413.500 107v417" stroke="#3f6294" stroke-width="4"/><path d="M414 108v415" stroke="#6d8bb2" stroke-width="1"/>
            <path d="M261 166.500h364M262 223.500h366M261 282.500h364M261 341.500h364M261 406.500h364M255 465.500h365" stroke="#4a7ab8" stroke-width="1.100"/>
            <g font-family="Lato" font-size="21.500" fill="#111"><text x="315" y="149" textLength="34" lengthAdjust="spacingAndGlyphs">Key</text><text x="488" y="149" textLength="53" lengthAdjust="spacingAndGlyphs">Value</text><text x="305" y="204" textLength="57" lengthAdjust="spacingAndGlyphs">12312</text><text x="451" y="204" textLength="74" lengthAdjust="spacingAndGlyphs">Object1</text><text x="303" y="264" textLength="58" lengthAdjust="spacingAndGlyphs">42345</text><text x="454" y="264" textLength="74" lengthAdjust="spacingAndGlyphs">Object2</text></g></g>
            <path d="m384 54 2 2 2-2 2 2 2-2 2 2 2-2 2 2 2-2 2 2 2-2 2 2 2-2 2 2 2-2 2 2 2-2 2 2 2-2 2 2 2-2 2 2 2-2 2 2 2-2 2 2 2-2 2 2 2-2 2 2 2-2 2 2 2-2 2 2 2-2 2 2 2-2 2 2 2-2 2 2 2-2 2 2 2-2 2 2 2-2 2 2 2-2 2 2 2-2 2 2 2-2 2 2 2-2 2 2" fill="none" stroke="#e33" stroke-width=".900"/>
            <path d="M625 286.300a33.500 33.500 0 1 1 0 49.400z" fill="#fff013"/><path d="M625 286.300a33.500 33.500 0 0 0 0 49.400z" fill="#98acaa"/><path d="M625 280v65" stroke="#3f6294" stroke-width="2"/>
            <path d="M648.500 311v20l5-5 4 8 4-2-4-8h6z" fill="#fff" stroke="#333" stroke-width="1.200"/>
            <path d="M339 83v22" stroke="#7d93b5" stroke-width="1.500"/><circle cx="339" cy="78" r="5" fill="#86cf48" stroke="#677c56" stroke-width="1.400"/>
            <g fill="#eef7fa" stroke="#667f92" stroke-width="1.300"><circle cx="262" cy="107" r="5"/><circle cx="416" cy="107" r="5"/><circle cx="262" cy="524" r="5"/><circle cx="416" cy="524" r="5"/><path d="M335 103h8v8h-8zM335 520h8v8h-8zM258 311h8v8h-8zM412 311h8v8h-8z" fill="#dff0f5"/></g>
          </svg></div></div>
        <div class="notes"><span>Заметки к слайду</span><svg style="margin-top:-6px" width="19" height="43" viewBox="0 0 19 43"><path d="M0 0h19v43H0z" fill="#d8dbe2"/><path d="m3 13 5-6 5 6zM3 30h10l-5 6z" fill="#858990"/></svg></div>
      </div>
    </div>
    <footer class="status d-flex align-items-center">
      <span class="nw" style="width:95px;padding-left:9px;font-size:12.500px">Слайд 1 из 1</span><i class="vsep"></i><span class="nw text-center" style="width:98px">"Тема Office"</span><i class="vsep"></i>
      <svg style="margin:0 19px 0 9px" width="20" height="20" viewBox="0 0 20 20"><path d="m1 10 9-3 9 5-8 7z" fill="#5d83cd"/><path d="m1 9 5-3 4 3 6-3 3 5-8 5z" fill="#fff" stroke="#8796b5"/><path d="m9 2 8 8m0-9-8 9" stroke="#ec5531" stroke-width="2.500"/></svg>
      <span style="width:124px">русский</span><i class="vsep"></i>
      <i class="vsep ms-auto" style="margin-right:5px"></i>
      <span class="hl d-flex align-items-center justify-content-center" style="width:22px;height:21px"><svg width="14" height="12"><path d="M1 1h12v10H1zM7 1v10M9 4h3v2H9zM7 8h6" fill="#fff" stroke="#444" stroke-width="1.500"/></svg></span>
      <svg style="margin-left:4px" width="62" height="18" viewBox="0 0 62 18" fill="none" stroke="#555" stroke-width="1.500"><path d="M1 4h5v3H1zM8 4h5v3H8zM1 11h5v3H1zM8 11h5v3H8zM27.500 4v11M22 3h4l1.500 1L29 3h4v10h-4l-1.500 1-1.500-1h-4zM24 6h2M24 9h2M30 6h2M30 9h2M43 4h12M45 4v5h8V4M49 9v5M46 14h6"/></svg>
      <span style="margin-left:9px;width:34px">83%</span>
      <svg width="180" height="22" viewBox="0 0 180 22" fill="#f3f4f6" stroke="#6b6e75"><path d="M18 11h120M76.500 7v8" stroke="#8c9097"/><circle cx="9" cy="11" r="8.500"/><circle cx="143" cy="11" r="8.500"/><path d="M4 11h10M138 11h10M143 6v10" stroke="#444" stroke-width="2"/><path d="M61 4h10v8l-5 5-5-5z"/><path d="M162.500 3.500h16v15h-16z" fill="#dde0e5"/><path d="M170.500 4v5m-2-2 2 2 2-2M170.500 18v-5m-2 2 2-2 2 2M163 11h5m-2-2 2 2-2 2M178 11h-5m2-2-2 2 2 2" fill="none" stroke="#444"/></svg>
      <span style="width:6px"></span>
    </footer>
    <aside class="chat">
      <div class="chat-top">Chat<div class="chat-x d-flex align-items-center justify-content-center"><svg width="12" height="12"><path d="m.500.500 11 11m0-11-11 11" stroke="#555" stroke-width="1.300"/></svg></div></div>
      <div class="msgs"><div><b>vasily@All</b>: привет!</div><div><b>vasily@All</b>: ++</div><div><b>Viewer 7@All</b>: всем привет</div><div><b>Vitalii@All</b>: list</div><div><b>Viewer 9@All</b>: comparable</div><div><b>Vitalii@All</b>: comp</div></div>
      <div style="height:48px;border:1px solid #a8a8a8;border-width:1px 0;padding:5px 6px"><div style="width:1px;height:16px;background:#333"></div></div>
      <div class="d-flex align-items-center msgs p-0" style="height:25px;padding-left:11px!important"><svg width="6" height="8"><path d="M0 0v8l6-4z"/></svg><span style="margin-left:10px">@All</span></div>
    </aside>
  </section>
</main>
</div>
</body>
</html>
